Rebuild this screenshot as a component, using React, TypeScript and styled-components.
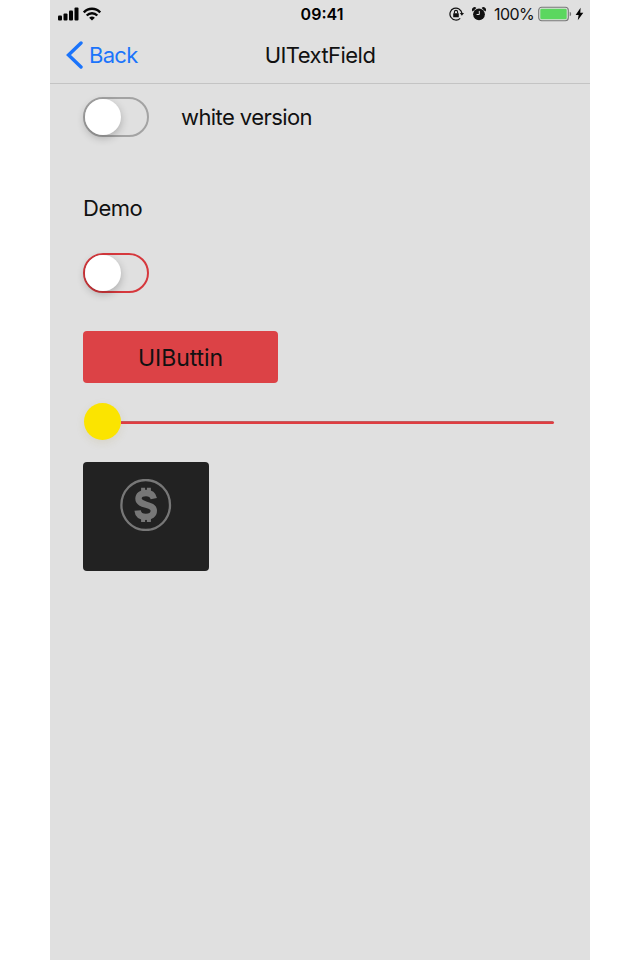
import React from 'react';
import styled, { createGlobalStyle } from 'styled-components';

const GlobalStyle = createGlobalStyle`
  * { box-sizing: border-box; }
  body { margin: 0; background: #fff; }
`;

const Stage = styled.div`
  display: flex;
  justify-content: center;
  width: 640px;
  height: 960px;
  background: #fff;
  overflow: hidden;
`;

const Screen = styled.main`
  display: flex;
  flex-direction: column;
  width: 540px;
  height: 960px;
  background: #e0e0e0;
  color: #111;
  font-family: Inter, 'Liberation Sans', sans-serif;
`;

const StatusBar = styled.header`
  display: grid;
  grid-template-columns: 1fr auto 1fr;
  align-items: center;
  height: 28px;
  padding: 0 5px 0 7px;
`;

const StatusGroup = styled.div<{ $end?: boolean }>`
  display: flex;
  align-items: center;
  justify-content: ${(p) => (p.$end ? 'flex-end' : 'flex-start')};
`;

const Time = styled.span`
  padding-left: 2px;
  font-size: 16px;
  font-weight: 600;
  line-height: 28px;
  color: #000;
`;

const Percent = styled.span`
  width: 40px;
  margin: 0 4px 0 8px;
  font-size: 16px;
  line-height: 28px;
  letter-spacing: -0.6px;
  white-space: nowrap;
`;

const NavBar = styled.nav`
  display: grid;
  grid-template-columns: 1fr auto 1fr;
  align-items: center;
  height: 56px;
  padding: 0 16px 2px;
  border-bottom: 1px solid #c4c4c4;
`;

const BackButton = styled.button`
  display: flex;
  align-items: center;
  gap: 6px;
  padding: 0;
  border: 0;
  background: none;
  color: #1b74fb;
  font: 400 22px/28px Inter, sans-serif;
  letter-spacing: -0.7px;
  cursor: pointer;
`;

const Title = styled.h1`
  margin: 0;
  font-size: 22px;
  font-weight: 400;
  line-height: 28px;
  letter-spacing: -0.55px;
`;

const Content = styled.section`
  display: flex;
  flex-direction: column;
  align-items: flex-start;
  padding: 13px 35px 0 33px;
`;

const SwitchRow = styled.div`
  display: flex;
  align-items: center;
  gap: 32px;
  height: 40px;
`;

const Label = styled.span<{ $spacing: number }>`
  font-size: 22px;
  line-height: 28px;
  letter-spacing: ${(p) => p.$spacing}px;
`;

const DemoHeading = styled.div`
  display: flex;
  height: 28px;
  margin: 57px 0 31.4px;
`;

const Switch = styled.button<{ $color: string }>`
  display: flex;
  align-items: center;
  width: 66px;
  height: 40px;
  padding: 0;
  border: 2px solid ${(p) => p.$color};
  border-radius: 20px;
  background: transparent;
`;

const SwitchKnob = styled.span`
  width: 36px;
  height: 36px;
  border-radius: 50%;
  background: #fff;
  box-shadow: 0 3px 9px rgba(0, 0, 0, 0.24);
`;

const ActionButton = styled.button`
  display: flex;
  align-items: center;
  justify-content: center;
  width: 195px;
  height: 52px;
  margin-top: 38px;
  padding: 1px 0 0;
  border: 0;
  border-radius: 4px;
  background: #dc4246;
  color: #111;
  font: 400 23px/28px Inter, sans-serif;
  letter-spacing: -0.1px;
`;

const Slider = styled.div`
  display: flex;
  align-items: center;
  width: 470px;
  height: 37px;
  margin: 19.6px 0 22px 1px;
`;

const SliderThumb = styled.span`
  flex: none;
  width: 37px;
  height: 37px;
  border-radius: 50%;
  background: #fbe400;
  box-shadow: 0 3px 8px rgba(160, 140, 60, 0.14);
`;

const SliderTrack = styled.span`
  flex: 1;
  height: 3px;
  margin-top: 2px;
  border-radius: 0 2px 2px 0;
  background: linear-gradient(#c35a5d 0 1px, #df3d41 1px);
`;

const Card = styled.div`
  display: flex;
  justify-content: center;
  width: 126px;
  height: 109px;
  padding-top: 17px;
  border-radius: 4px;
  background: #222;
`;

const SignalIcon = () => (
  <svg width="22" height="14" viewBox="0 0 22 14" fill="#050505">
    <rect x="1" y="8.5" width="4" height="5" rx="1" />
    <rect x="6.5" y="6.5" width="4" height="7" rx="1" />
    <rect x="12" y="3.5" width="4" height="10" rx="1" />
    <rect x="17.5" y="0.5" width="4" height="13" rx="1" />
  </svg>
);

const WifiIcon = styled(({ className }: { className?: string }) => (
  <svg className={className} width="18" height="14" viewBox="0 0 18 14" fill="none" stroke="#050505">
    <path d="M.8 5.4C5.2.6 12.8.6 17.2 5.4" strokeWidth="2.5" />
    <path d="M3.7 8.5c3-3 7.6-3 10.6 0" strokeWidth="2.4" />
    <path d="M9 13.6 6.1 10.8q2.9-2.4 5.8 0Z" fill="#050505" stroke="none" />
  </svg>
))`
  margin-left: 4px;
`;

const RotationLockIcon = () => (
  <svg width="16" height="14" viewBox="0 0 16 14" fill="none" stroke="#111">
    <path d="M12.9 6.2A6 6 0 1 0 11.2 11.3" strokeWidth="1.2" />
    <path d="M10.8 6h4.2l-2.1 2.8Z" fill="#111" stroke="none" />
    <rect x="4.2" y="6.2" width="5.6" height="4" rx=".5" fill="#111" stroke="none" />
    <path d="M5.4 6.4V5a1.6 1.6 0 0 1 3.2 0v1.4" strokeWidth="1.1" />
  </svg>
);

const AlarmIcon = styled(({ className }: { className?: string }) => (
  <svg className={className} width="14" height="14" viewBox="0 0 14 14">
    <circle cx="7" cy="7.3" r="5.9" fill="#111" />
    <path d="M.7 4.6A2.4 2.4 0 0 1 4.4 1ZM9.6 1A2.4 2.4 0 0 1 13.3 4.6Z" fill="#111" />
    <path d="M7.3 3.9v3.6H4.6" stroke="#e0e0e0" fill="none" />
  </svg>
))`
  margin-left: 7px;
`;

const BatteryIcon = () => (
  <svg width="35" height="16" viewBox="0 0 35 16">
    <rect x=".7" y="1.2" width="29.6" height="13.6" rx="3" fill="none" stroke="#777" strokeWidth="1.1" />
    <rect x="2.3" y="2.8" width="26.4" height="10.4" rx="1.3" fill="#5bd75f" />
    <path d="M31.7 5.7q1.5.5 1.5 2.3t-1.5 2.3Z" fill="#777" />
  </svg>
);

const BoltIcon = styled(({ className }: { className?: string }) => (
  <svg className={className} width="9" height="14" viewBox="0 0 9 14">
    <path d="M5.6.7.6 8h3L2.8 13.3 8.3 5.8h-3Z" fill="#050505" />
  </svg>
))`
  margin-left: 2px;
  margin-right: 1px;
`;

const ChevronIcon = () => (
  <svg width="17" height="28" viewBox="0 0 17 28" fill="none" stroke="#1b74fb" strokeWidth="3.4" strokeLinecap="round">
    <path d="M15 2 2.5 14 15 26" />
  </svg>
);

const CoinIcon = () => (
  <svg width="52" height="52" viewBox="0 0 52 52" fill="none">
    <ellipse cx="25.7" cy="26" rx="24.3" ry="25" stroke="#777" strokeWidth="2.3" />
    <path
      d="M33.8 19.7C33 15.7 30.3 14 26 14c-4.8 0-7.5 2.2-7.5 5.6 0 8.2 15.3 4.1 15.3 12.2 0 3.8-3.1 6.1-7.9 6.1-5.1 0-7.9-2.3-8.3-6.4"
      stroke="#777"
      strokeWidth="6.4"
    />
    <path d="M23.1 8.8v5M28.9 8.8v5M23.1 38v5M28.9 38v5" stroke="#777" strokeWidth="4" />
  </svg>
);

export default function App() {
  return (
    <>
      <GlobalStyle />
      <Stage>
        <Screen>
          <StatusBar>
            <StatusGroup>
              <SignalIcon />
              <WifiIcon />
            </StatusGroup>
            <Time>09:41</Time>
            <StatusGroup $end>
              <RotationLockIcon />
              <AlarmIcon />
              <Percent>100%</Percent>
              <BatteryIcon />
              <BoltIcon />
            </StatusGroup>
          </StatusBar>
          <NavBar>
            <BackButton><ChevronIcon />Back</BackButton>
            <Title>UITextField</Title>
          </NavBar>
          <Content>
            <SwitchRow>
              <Switch $color="#a3a3a3" role="switch" aria-checked={false} aria-label="white version"><SwitchKnob /></Switch>
              <Label $spacing={-0.58}>white version</Label>
            </SwitchRow>
            <DemoHeading><Label $spacing={-0.45}>Demo</Label></DemoHeading>
            <Switch $color="#d6383d" role="switch" aria-checked={false} aria-label="Demo"><SwitchKnob /></Switch>
            <ActionButton>UIButtin</ActionButton>
            <Slider role="slider" aria-valuemin={0} aria-valuemax={100} aria-valuenow={0}>
              <SliderThumb />
              <SliderTrack />
            </Slider>
            <Card><CoinIcon /></Card>
          </Content>
        </Screen>
      </Stage>
    </>
  );
}
